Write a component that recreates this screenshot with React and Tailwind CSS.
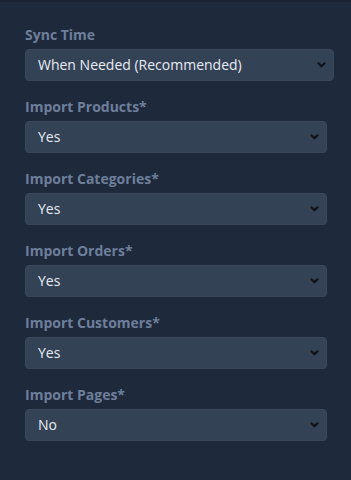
import React from "react";

const fields = [
  { label: "Sync Time", value: "When Needed (Recommended)", wide: true },
  { label: "Import Products*", value: "Yes" },
  { label: "Import Categories*", value: "Yes" },
  { label: "Import Orders*", value: "Yes" },
  { label: "Import Customers*", value: "Yes" },
  { label: "Import Pages*", value: "No" },
];

function Chevron() {
  return (
    <svg width="9" height="6" viewBox="0 0 9 6" className="shrink-0">
      <path d="M1.5 1.3 L4.5 4.3 L7.5 1.3" fill="none" stroke="#0f1319" strokeWidth="2.2" strokeLinecap="round" strokeLinejoin="round" />
    </svg>
  );
}

export default function App() {
  return (
    <div
      className="w-[351px] h-[480px] bg-[#1e293b] border-t-2 border-[#1a2333] pl-[25px] pr-[17px] pt-[23px] flex flex-col gap-4"
      style={{ fontFamily: '"Open Sans", sans-serif' }}
    >
      {fields.map((f) => (
        <div key={f.label} className="flex flex-col gap-1">
          <div className="text-[14px] leading-5 font-bold text-[#6e7f9b]">{f.label}</div>
          <div
            className={`h-8 rounded-[4px] bg-[#344256] border border-[#3a475a] flex items-center justify-between pl-[12px] pr-[7px] ${
              f.wide ? "w-[309px]" : "w-[302px]"
            }`}
          >
            <span className="text-[14px] leading-5 text-[#e8edf3]">{f.value}</span>
            <Chevron />
          </div>
        </div>
      ))}
    </div>
  );
}
